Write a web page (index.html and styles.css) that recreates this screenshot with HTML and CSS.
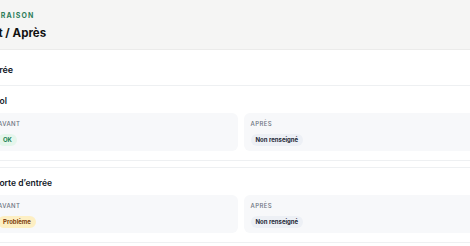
FILE: index.html
```html
<!DOCTYPE html>
<html lang="fr">
<head>
    <meta charset="UTF-8">
    <meta name="viewport" content="width=device-width, initial-scale=1.0">
    <title>Comparaison Avant / Après</title>
    <link rel="stylesheet" href="styles.css">
</head>
<body>
    <div class="sheet">
        <div class="sheet-header">
            <p class="eyebrow">Comparaison</p>
            <h1>Avant / Après</h1>
        </div>

        <h2 class="section-title">Entrée</h2>

        <div class="item">
            <h3 class="item-title">Sol</h3>
            <div class="compare">
                <div class="panel">
                    <span class="panel-label">Avant</span>
                    <span class="badge badge-ok">OK</span>
                </div>
                <div class="panel">
                    <span class="panel-label">Après</span>
                    <span class="badge badge-empty">Non renseigné</span>
                </div>
            </div>
        </div>

        <div class="item">
            <h3 class="item-title">Porte d’entrée</h3>
            <div class="compare">
                <div class="panel">
                    <span class="panel-label">Avant</span>
                    <span class="badge badge-warn">Problème</span>
                </div>
                <div class="panel">
                    <span class="panel-label">Après</span>
                    <span class="badge badge-empty">Non renseigné</span>
                </div>
            </div>
        </div>
    </div>
</body>
</html>
```

FILE: styles.css
```css
body {
    font-family: Inter, "Noto Sans", Arial, sans-serif;
    margin: 0;
    padding: 0;
    background-color: #fff;
    color: #111827;
    overflow: hidden;
}

.sheet {
    width: 560px;
    margin-left: -40px;
}

.sheet-header {
    height: 50px;
    box-sizing: border-box;
    padding: 11px 0 0;
    background-color: #f5f5f4;
    border-bottom: 1px solid #ebebea;
}

.eyebrow {
    margin: 0 0 0 9px;
    font-size: 7px;
    line-height: 9px;
    font-weight: 700;
    letter-spacing: 1.1px;
    text-transform: uppercase;
    color: #2e7d5b;
}

h1 {
    margin: 5px 0 0 10px;
    font-size: 11.5px;
    line-height: 17px;
    font-weight: 700;
    color: #111;
}

.section-title {
    margin: 0;
    height: 35px;
    box-sizing: border-box;
    padding: 14px 25px 0;
    font-size: 9px;
    line-height: 12px;
    font-weight: 600;
}

.item {
    padding: 9px 30px 9px 31px;
    border-top: 1px solid #eef0f2;
    border-bottom: 1px solid #eef0f2;
    margin-bottom: 6px;
}

.item-title {
    margin: 0 0 6px 3px;
    font-size: 8.5px;
    line-height: 12px;
    font-weight: 600;
}

.compare {
    display: grid;
    grid-template-columns: 1fr 1fr;
    gap: 6px;
}

.panel {
    display: flex;
    flex-direction: column;
    align-items: flex-start;
    gap: 6px;
    padding: 7px 7px 5px;
    background-color: #f7f8fa;
    border-radius: 6px;
}

.panel-label {
    font-size: 6px;
    line-height: 8px;
    font-weight: 500;
    letter-spacing: 0.4px;
    text-transform: uppercase;
    color: #6b7280;
}

.badge {
    display: inline-block;
    padding: 0 5px;
    height: 12px;
    line-height: 12px;
    border-radius: 6px;
    font-size: 6px;
    font-weight: 700;
}

.badge-ok {
    background-color: #e5f6ec;
    color: #17804f;
}

.badge-warn {
    background-color: #fdefc3;
    color: #7c3d0c;
}

.badge-empty {
    background-color: #edf0f5;
    color: #1f2937;
}
```
